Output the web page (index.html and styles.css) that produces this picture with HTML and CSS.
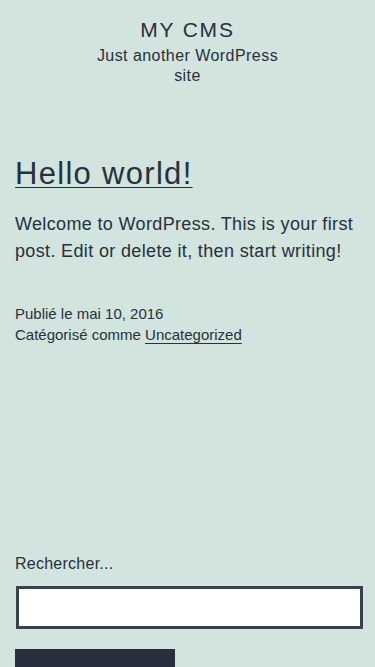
FILE: index.html
```html
<!DOCTYPE html>
<html lang="fr">
<head>
    <meta charset="UTF-8">
    <meta name="viewport" content="width=device-width, initial-scale=1.0">
    <title>MY CMS</title>
    <link rel="stylesheet" href="styles.css">
</head>
<body>
    <header class="site-header">
        <p class="site-title">MY CMS</p>
        <p class="site-description">Just another WordPress site</p>
    </header>

    <main class="site-main">
        <article class="post">
            <h2 class="entry-title"><a href="#">Hello world!</a></h2>
            <div class="entry-content">
                <p>Welcome to WordPress. This is your first post. Edit or delete it, then start writing!</p>
            </div>
            <footer class="entry-footer">
                <span class="posted-on">Publié le mai 10, 2016</span>
                <span class="cat-links">Catégorisé comme <a href="#">Uncategorized</a></span>
            </footer>
        </article>
    </main>

    <aside class="widget-area">
        <form class="search-form" onsubmit="return false">
            <label for="search" class="search-label">Rechercher...</label>
            <input type="search" id="search" class="search-field">
            <button type="submit" class="search-submit"></button>
        </form>
    </aside>
</body>
</html>
```

FILE: styles.css
```css
body {
    margin: 0;
    padding: 0 15px;
    font-family: "Liberation Sans", Arial, sans-serif;
    background: #d1e4dd;
    color: #28303d;
}

a {
    color: #28303d;
    text-decoration: underline;
    text-decoration-thickness: 1px;
    text-underline-offset: 3px;
}

.site-header {
    text-align: center;
    padding-top: 17px;
}

.site-title {
    margin: 0;
    font-size: 21px;
    line-height: 26px;
    letter-spacing: 1.8px;
}

.site-description {
    margin: 3px auto 0;
    font-size: 16px;
    line-height: 20px;
    letter-spacing: 0.45px;
    max-width: 210px;
}

.site-main {
    padding-top: 70px;
}

.entry-title {
    margin: 0;
    font-size: 31px;
    font-weight: normal;
    line-height: 36px;
    letter-spacing: 1.3px;
}

.entry-content p {
    margin: 19px 0 0;
    font-size: 18px;
    line-height: 27px;
    letter-spacing: 0.35px;
}

.entry-footer {
    margin-top: 38px;
    font-size: 15px;
    line-height: 21px;
}

.entry-footer span {
    display: block;
}

.widget-area {
    padding-top: 209px;
}

.search-label {
    display: block;
    font-size: 16px;
    line-height: 20px;
    letter-spacing: 0.25px;
}

.search-field {
    display: block;
    box-sizing: border-box;
    width: 347px;
    height: 43px;
    margin: 12px 0 0 1px;
    border: 3px solid #39414d;
    background: #fff;
    border-radius: 0;
}

.search-submit {
    display: block;
    width: 160px;
    height: 50px;
    margin-top: 20px;
    border: none;
    background: #28303d;
    border-radius: 0;
}
```
